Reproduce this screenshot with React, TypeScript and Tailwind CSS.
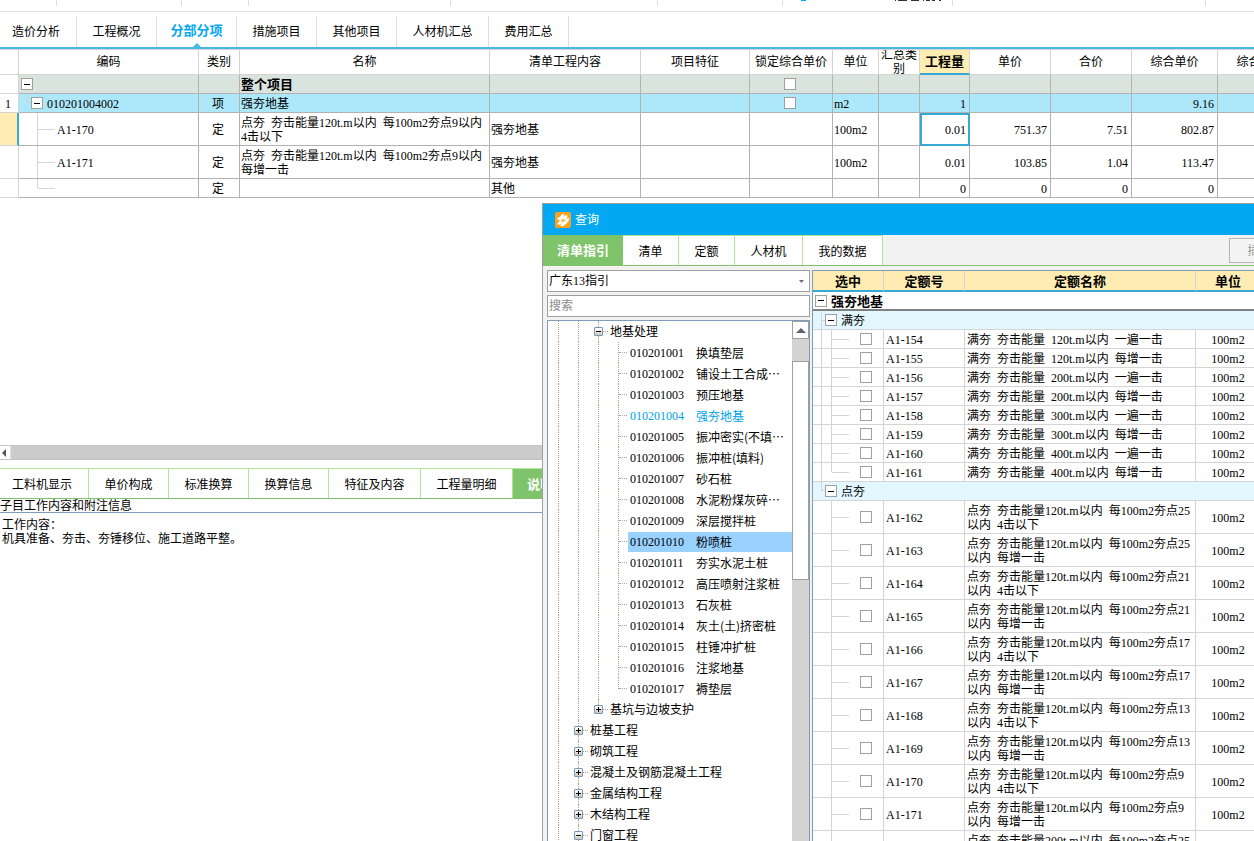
import React from "react";

const toolbarGroups = ["w-[57px]", "w-[125px]", "w-[67px]", "w-[202px]", "w-[207px]", "w-[125px]"];

const mainTabs = [
  { label: "造价分析", width: "w-[77px] pr-1" },
  { label: "工程概况", width: "w-20" },
  { label: "分部分项", width: "w-20", active: true },
  { label: "措施项目", width: "w-20" },
  { label: "其他项目", width: "w-20" },
  { label: "人材机汇总", width: "w-[92px]" },
  { label: "费用汇总", width: "w-20" },
];

const columns = [
  { label: "", width: "w-[19px]" },
  { label: "编码", width: "w-[180px]" },
  { label: "类别", width: "w-[41px]" },
  { label: "名称", width: "w-[250px]" },
  { label: "清单工程内容", width: "w-[151px]" },
  { label: "项目特征", width: "w-[109px]" },
  { label: "锁定综合单价", width: "w-[83px]" },
  { label: "单位", width: "w-[46px]" },
  { label: "汇总类别", width: "w-[41px]" },
  { label: "工程量", width: "w-[50px]", active: true },
  { label: "单价", width: "w-[81px]" },
  { label: "合价", width: "w-[81px]" },
  { label: "综合单价", width: "w-[86px]" },
  { label: "综合合价", width: "w-[86px]" },
];

type Row = {
  no: string;
  level: number;
  code: string;
  kind: string;
  name: string;
  content: string;
  lock: boolean;
  unit: string;
  qty: string;
  price: string;
  total: string;
  full: string;
  tall?: boolean;
  current?: boolean;
  last?: boolean;
};

const rows: Row[] = [
  { no: "", level: 0, code: "", kind: "", name: "整个项目", content: "", lock: true, unit: "", qty: "", price: "", total: "", full: "" },
  { no: "1", level: 1, code: "010201004002", kind: "项", name: "强夯地基", content: "", lock: true, unit: "m2", qty: "1", price: "", total: "", full: "9.16" },
  { no: "", level: 2, code: "A1-170", kind: "定", name: "点夯 夯击能量120t.m以内 每100m2夯点9以内\n4击以下", content: "强夯地基", lock: false, unit: "100m2", qty: "0.01", price: "751.37", total: "7.51", full: "802.87", tall: true, current: true },
  { no: "", level: 2, code: "A1-171", kind: "定", name: "点夯 夯击能量120t.m以内 每100m2夯点9以内\n每增一击", content: "强夯地基", lock: false, unit: "100m2", qty: "0.01", price: "103.85", total: "1.04", full: "113.47", tall: true },
  { no: "", level: 2, code: "", kind: "定", name: "", content: "其他", lock: false, unit: "", qty: "0", price: "0", total: "0", full: "0", last: true },
];

const detailTabs = [
  { label: "工料机显示", width: "w-[89px] pr-1" },
  { label: "单价构成", width: "w-20" },
  { label: "标准换算", width: "w-20" },
  { label: "换算信息", width: "w-20" },
  { label: "特征及内容", width: "w-[92px]" },
  { label: "工程量明细", width: "w-[92px]" },
  { label: "说明信息", width: "w-20", active: true },
];

const dialogTabs = [
  { label: "清单指引", width: "w-20", active: true },
  { label: "清单", width: "w-14" },
  { label: "定额", width: "w-14" },
  { label: "人材机", width: "w-[68px]" },
  { label: "我的数据", width: "w-20" },
];

const leaves = [
  ["010201001", "换填垫层"],
  ["010201002", "铺设土工合成⋯"],
  ["010201003", "预压地基"],
  ["010201004", "强夯地基"],
  ["010201005", "振冲密实(不填⋯"],
  ["010201006", "振冲桩(填料)"],
  ["010201007", "砂石桩"],
  ["010201008", "水泥粉煤灰碎⋯"],
  ["010201009", "深层搅拌桩"],
  ["010201010", "粉喷桩"],
  ["010201011", "夯实水泥土桩"],
  ["010201012", "高压喷射注浆桩"],
  ["010201013", "石灰桩"],
  ["010201014", "灰土(土)挤密桩"],
  ["010201015", "柱锤冲扩桩"],
  ["010201016", "注浆地基"],
  ["010201017", "褥垫层"],
];

const chapters = [
  { label: "桩基工程" },
  { label: "砌筑工程" },
  { label: "混凝土及钢筋混凝土工程" },
  { label: "金属结构工程" },
  { label: "木结构工程" },
  { label: "门窗工程", open: true },
];

const fullQuotas = [
  ["A1-154", "满夯 夯击能量 120t.m以内 一遍一击"],
  ["A1-155", "满夯 夯击能量 120t.m以内 每增一击"],
  ["A1-156", "满夯 夯击能量 200t.m以内 一遍一击"],
  ["A1-157", "满夯 夯击能量 200t.m以内 每增一击"],
  ["A1-158", "满夯 夯击能量 300t.m以内 一遍一击"],
  ["A1-159", "满夯 夯击能量 300t.m以内 每增一击"],
  ["A1-160", "满夯 夯击能量 400t.m以内 一遍一击"],
  ["A1-161", "满夯 夯击能量 400t.m以内 每增一击"],
];

const pointQuotas = [
  ["A1-162", "点夯 夯击能量120t.m以内 每100m2夯点25\n以内 4击以下"],
  ["A1-163", "点夯 夯击能量120t.m以内 每100m2夯点25\n以内 每增一击"],
  ["A1-164", "点夯 夯击能量120t.m以内 每100m2夯点21\n以内 4击以下"],
  ["A1-165", "点夯 夯击能量120t.m以内 每100m2夯点21\n以内 每增一击"],
  ["A1-166", "点夯 夯击能量120t.m以内 每100m2夯点17\n以内 4击以下"],
  ["A1-167", "点夯 夯击能量120t.m以内 每100m2夯点17\n以内 每增一击"],
  ["A1-168", "点夯 夯击能量120t.m以内 每100m2夯点13\n以内 4击以下"],
  ["A1-169", "点夯 夯击能量120t.m以内 每100m2夯点13\n以内 每增一击"],
  ["A1-170", "点夯 夯击能量120t.m以内 每100m2夯点9\n以内 4击以下"],
  ["A1-171", "点夯 夯击能量120t.m以内 每100m2夯点9\n以内 每增一击"],
  ["A1-172", "点夯 夯击能量200t.m以内 每100m2夯点25\n以内 4击以下"],
];

/* Blanks between Chinese words are en spaces, half as wide as a character. */
const withEnSpaces = (text: string) => text.replaceAll(" ", "\u2002");

function Fold({ label }: { label: string }) {
  return (
    <button
      type="button"
      aria-label={label}
      className="flex size-3 shrink-0 items-center justify-center border border-[#a0a0a0] bg-white"
    >
      <span className="h-px w-[6px] bg-black" />
    </button>
  );
}

function Tick({ label }: { label: string }) {
  return (
    <input
      type="checkbox"
      aria-label={label}
      className="block size-3 shrink-0 appearance-none border border-[#a0a0a0] bg-white"
    />
  );
}

function CodeCell({ row }: { row: Row }) {
  if (row.level === 0) {
    return (
      <div className="flex h-[18px] items-center pl-0.5">
        <Fold label="收起整个项目" />
      </div>
    );
  }
  if (row.level === 1) {
    return (
      <div className="flex h-[18px] items-center pl-2">
        <span className="h-[9px] w-1 self-start border-b border-l border-[#d4d4d4]" />
        <Fold label="收起强夯地基" />
        <span className="pl-1 pt-0.5">{row.code}</span>
      </div>
    );
  }
  return (
    <div className={`flex items-center pl-[18px] ${row.tall ? "h-8" : "h-[18px]"}`}>
      <span className={`w-px self-start bg-[#d4d4d4] ${row.last ? "h-[9px]" : "h-full"}`} />
      <span className="h-px w-[17px] bg-[#d4d4d4]" />
      <span className="pl-0.5 pt-0.5">{row.code}</span>
    </div>
  );
}

function MainTable() {
  return (
    <table className="w-[1304px] table-fixed border-separate border-spacing-0">
      <thead>
        <tr>
          {columns.map((c, i) => (
            <th
              key={i}
              className={`h-[26px] overflow-hidden border-r border-t border-[#d4d4d4] p-0 leading-[14px] ${c.width} ${
                c.active
                  ? "border-b-2 border-b-[#38a8d4] bg-[#feecb2] text-[13px] font-bold"
                  : "border-b font-normal"
              }`}
            >
              <div className="flex max-h-6 items-center justify-center">{c.label}</div>
            </th>
          ))}
        </tr>
      </thead>
      <tbody>
        {rows.map((r, i) => {
          const tone = r.level === 0 ? "bg-[#dae4de]" : r.level === 1 ? "bg-[#ade8fa]" : "bg-white";
          const cell = `border-b border-r border-[#b2b2b2] pb-0 pl-px pr-[3px] pt-0.5 ${tone}`;
          return (
            <tr key={i} className={r.tall ? "h-[33px]" : "h-[19px]"}>
              <td
                className={`border-b border-[#d4d4d4] pb-0 pl-[5px] pr-0 pt-0.5 ${
                  r.current ? "border-r-2 border-r-[#38a8d4] bg-[#feecb2]" : "border-r"
                }`}
              >
                {r.no}
              </td>
              <td className={`border-b border-r border-[#b2b2b2] p-0 ${tone}`}>
                <CodeCell row={r} />
              </td>
              <td className={`${cell} text-center`}>{r.kind}</td>
              <td className={`${cell} whitespace-pre ${r.level === 0 ? "text-[13px] font-bold" : ""}`}>
                {withEnSpaces(r.name)}
              </td>
              <td className={cell}>{r.content}</td>
              <td className={cell} />
              <td className={`border-b border-r border-[#b2b2b2] py-0 pl-0 pr-0.5 ${tone}`}>
                <div className="flex justify-center">{r.lock && <Tick label={`锁定综合单价 ${r.name}`} />}</div>
              </td>
              <td className={cell}>{r.unit}</td>
              <td className={cell} />
              <td className={`${cell} text-right ${r.current ? "outline-2 -outline-offset-2 outline-[#38a8d4]" : ""}`}>
                {r.qty}
              </td>
              <td className={`${cell} text-right`}>{r.price}</td>
              <td className={`${cell} text-right`}>{r.total}</td>
              <td className={`${cell} text-right`}>{r.full}</td>
              <td className={cell} />
            </tr>
          );
        })}
      </tbody>
    </table>
  );
}

function Guide() {
  return (
    <span className="flex h-full w-5 shrink-0 pl-[10px]">
      <span className="h-full border-l border-dotted border-[#a9a594]" />
    </span>
  );
}

function Branch({ end }: { end?: boolean }) {
  return (
    <span className="flex h-full w-5 shrink-0 items-center pl-[10px]">
      <span className={`self-start border-l border-dotted border-[#a9a594] ${end ? "h-[11px]" : "h-full"}`} />
      <span className="h-px w-2 border-t border-dotted border-[#a9a594]" />
    </span>
  );
}

function Node({ open, end, label }: { open?: boolean; end?: boolean; label: string }) {
  return (
    <span className="flex h-full w-[22px] shrink-0 items-center pl-[6px]">
      <span className="flex h-full w-[9px] flex-col items-center">
        <span className="h-[6px] border-l border-dotted border-[#a9a594]" />
        <button
          type="button"
          aria-label={label}
          className="size-[9px] shrink-0 rounded-[1px] border border-[#7898b5] bg-linear-to-b from-white to-[#cfcabd]"
        >
          <svg viewBox="0 0 7 7" className="block size-[7px]">
            <path d={open ? "M1 3h5v1H1z" : "M1 3h2V1h1v2h2v1H4v2H3V4H1z"} fill="#000" shapeRendering="crispEdges" />
          </svg>
        </button>
        {!end && <span className="h-[6px] border-l border-dotted border-[#a9a594]" />}
      </span>
      <span className="h-px w-[5px] border-t border-dotted border-[#a9a594]" />
    </span>
  );
}

function Tree() {
  return (
    <ul className="min-w-0 flex-1 overflow-hidden">
      <li className="flex h-[21px] items-center">
        <Guide />
        <Guide />
        <Node open label="收起地基处理" />
        地基处理
      </li>
      {leaves.map(([code, name], i) => (
        <li key={code} className="flex h-[21px] items-center whitespace-nowrap">
          <Guide />
          <Guide />
          <Guide />
          <Branch end={i === leaves.length - 1} />
          <span
            className={`flex h-5 flex-1 items-center pl-0.5 ${code === "010201010" ? "bg-[#99d1ff]" : ""} ${
              code === "010201004" ? "text-[#009fec]" : ""
            }`}
          >
            <span className="w-[66px] shrink-0">{code}</span>
            <span className="font-['Noto_Sans_CJK_SC',sans-serif]">{name}</span>
          </span>
        </li>
      ))}
      <li className="flex h-[21px] items-center">
        <Guide />
        <Guide />
        <Node end label="展开基坑与边坡支护" />
        基坑与边坡支护
      </li>
      {chapters.map((c) => (
        <li key={c.label} className="flex h-[21px] items-center whitespace-nowrap">
          <Guide />
          <Node open={c.open} label={c.label} />
          {c.label}
        </li>
      ))}
    </ul>
  );
}

function QuotaRow({ code, name, tall, outer, end }: { code: string; name: string; tall?: boolean; outer?: boolean; end?: boolean }) {
  return (
    <tr className={tall ? "h-[33px]" : "h-[19px]"}>
      <td className="border-b border-r border-[#d4d4d4] p-0">
        <div className={`flex items-center pl-2 ${tall ? "h-8" : "h-[18px]"}`}>
          <span className={`h-full w-[10px] border-l ${outer ? "border-[#d4d4d4]" : "border-transparent"}`} />
          <span className={`w-px self-start bg-[#d4d4d4] ${end ? "h-[9px]" : "h-full"}`} />
          <span className="h-px w-[17px] bg-[#d4d4d4]" />
          <span className="pl-[11px]">
            <Tick label={code} />
          </span>
        </div>
      </td>
      <td className="border-b border-r border-[#d4d4d4] px-0.5 pb-0 pt-0.5">{code}</td>
      <td className="whitespace-pre border-b border-r border-[#d4d4d4] px-0.5 pb-0 pt-0.5">{withEnSpaces(name)}</td>
      <td className="border-b border-r border-[#d4d4d4] px-0 pb-0 pt-0.5 text-center">100m2</td>
    </tr>
  );
}

function QuotaTable() {
  const heads = [
    { label: "选中", width: "w-[71px]" },
    { label: "定额号", width: "w-[81px]" },
    { label: "定额名称", width: "w-[231px]" },
    { label: "单位", width: "w-[65px]" },
  ];
  return (
    <table className="w-[448px] table-fixed border-separate border-spacing-0">
      <thead>
        <tr>
          {heads.map((h) => (
            <th
              key={h.label}
              className={`h-[21px] border-b-2 border-r border-b-[#38a8d4] border-r-[#d4d4d4] bg-[#feecb2] px-0 pb-0 pt-0.5 text-[13px] font-bold ${h.width}`}
            >
              {h.label}
            </th>
          ))}
        </tr>
      </thead>
      <tbody>
        <tr className="h-[19px]">
          <td colSpan={4} className="border-b-2 border-[#808080] p-0">
            <div className="flex h-[17px] items-center gap-1 pl-0.5 text-[13px] font-bold">
              <Fold label="收起强夯地基" />
              <span className="pt-0.5">强夯地基</span>
            </div>
          </td>
        </tr>
        <tr className="h-[19px]">
          <td colSpan={4} className="border-b border-[#d4d4d4] bg-[#e2f7ff] p-0">
            <div className="flex h-[18px] items-center pl-2">
              <span className="flex h-full w-1 items-center border-l border-[#d4d4d4]">
                <span className="h-px w-full bg-[#d4d4d4]" />
              </span>
              <Fold label="收起满夯" />
              <span className="pl-1 pt-0.5">满夯</span>
            </div>
          </td>
        </tr>
        {fullQuotas.map(([code, name], i) => (
          <QuotaRow key={code} code={code} name={name} outer end={i === fullQuotas.length - 1} />
        ))}
        <tr className="h-[19px]">
          <td colSpan={4} className="border-b border-[#d4d4d4] bg-[#e2f7ff] p-0">
            <div className="flex h-[18px] items-center pl-2">
              <span className="h-[9px] w-1 self-start border-b border-l border-[#d4d4d4]" />
              <Fold label="收起点夯" />
              <span className="pl-1 pt-0.5">点夯</span>
            </div>
          </td>
        </tr>
        {pointQuotas.map(([code, name]) => (
          <QuotaRow key={code} code={code} name={name} tall />
        ))}
      </tbody>
    </table>
  );
}

function QueryDialog() {
  return (
    <section
      aria-label="查询"
      className="absolute bottom-0 left-[542px] right-0 top-[203px] flex flex-col overflow-hidden border-l border-t border-[#a0a0a0] bg-[#f2f2f2]"
    >
      <header className="flex h-[31px] shrink-0 items-center gap-1 bg-[#02a8f1] pl-3 text-white">
        <svg viewBox="0 0 16 16" className="size-4">
          <rect width="16" height="16" rx="2" fill="#f8a21f" />
          <path d="M1.500 6.500C4 6 6 4 7 2l2.500.5L8 5l3-2 2 1-2 2.500 3.500-.5c-.5 3.500-3.500 7-7.500 8.500L5 13.500 7 11l-3.500 2-1-1.500L5 8.500z" fill="#fff" />
          <path d="M5.500 9.500 8.500 7l-1 3 3.500-2.500" fill="none" stroke="#f8a21f" strokeWidth=".9" />
        </svg>
        <h2>查询</h2>
      </header>
      <nav className="flex h-[31px] shrink-0 border-b border-[#7fc46a]">
        {dialogTabs.map((t) => (
          <button
            key={t.label}
            type="button"
            className={`pt-0.5 ${t.width} ${
              t.active ? "bg-[#7fc46a] text-[13px] font-bold text-white" : "border-r border-t border-[#b0e697] bg-white"
            }`}
          >
            {t.label}
          </button>
        ))}
        <div className="flex min-w-0 flex-1 justify-end overflow-hidden pt-[3px]">
          <button type="button" className="-mr-9 h-[25px] w-[61px] shrink-0 border border-[#b4b4b4] bg-[#f4f4f4] text-[#9a9a9a]">
            插入
          </button>
        </div>
      </nav>
      <div className="flex min-h-0 flex-1 gap-0.5 pl-1 pt-1">
        <div className="flex w-[263px] shrink-0 flex-col gap-[3px]">
          <div className="flex h-[22px] shrink-0 items-center border border-[#a0a0a0] bg-white">
            <select aria-label="指引库" className="h-full flex-1 appearance-none bg-transparent pl-px">
              <option>广东13指引</option>
            </select>
            <svg viewBox="0 0 5 3" className="mr-[5px] h-[3px] w-[5px]">
              <path d="M0 0h5L2.500 3z" fill="#6b6b7b" />
            </svg>
          </div>
          <input
            type="text"
            aria-label="搜索"
            placeholder="搜索"
            className="h-[22px] w-full shrink-0 border border-[#a0a0a0] bg-white pl-px placeholder:text-[#8a8a8a]"
          />
          <div className="flex min-h-0 flex-1 overflow-hidden border-x border-t border-[#7f9db9] bg-white">
            <Tree />
            <div className="flex w-[17px] shrink-0 flex-col bg-[#d3d3d3]">
              <button
                type="button"
                aria-label="向上滚动"
                className="flex h-[18px] items-center justify-center border border-[#a0a0a0] bg-white"
              >
                <svg viewBox="0 0 10 5" className="h-[5px] w-[10px]">
                  <path d="M0 5 5 0l5 5z" fill="#5f6272" />
                </svg>
              </button>
              <div className="mt-[22px] h-[219px] border border-[#a0a0a0] bg-white" />
            </div>
          </div>
        </div>
        <div className="min-w-0 flex-1 overflow-hidden border-l border-t border-[#7f9db9] bg-white">
          <QuotaTable />
        </div>
      </div>
    </section>
  );
}

export default function App() {
  return (
    <main
      lang="zh-CN"
      className="relative flex h-screen flex-col overflow-hidden bg-white font-['Liberation_Serif','Noto_Sans_CJK_SC',serif] text-xs leading-[14px] text-black"
    >
      <div className="flex h-3 shrink-0 border-b border-[#e0e0e0]">
        {toolbarGroups.map((w, i) => (
          <span key={i} className={`h-[6px] shrink-0 border-r border-[#dcdcdc] ${w}`} />
        ))}
        <span className="flex h-[6px] w-[170px] shrink-0 border-r border-[#dcdcdc] pl-[18px]">
          <svg viewBox="0 0 140 2" className="h-0.5 w-[140px]" shapeRendering="crispEdges">
            <path d="M0 0h5v1H0z" fill="#02a8f1" />
            <path d="M94 0h1v1h-1zM97 0h9v1h-9zM110 0h8v1h-8zM122 0h1v1h-1zM125 0h4v1h-4zM131 0h3v1h-3zM138 0h2v1h-2z" fill="#333" />
          </svg>
        </span>
        <span className="h-[6px] w-[253px] shrink-0 border-r border-[#dcdcdc]" />
      </div>
      <nav className="flex h-[37px] shrink-0 border-b-2 border-[#46b8e2] pt-1">
        {mainTabs.map((t) => (
          <button
            key={t.label}
            type="button"
            className={`relative border-r border-[#dcdcdc] ${t.width} ${
              t.active ? "pb-0.5 text-[13px] font-bold text-[#02a8f1]" : ""
            }`}
          >
            {t.label}
            {t.active && (
              <svg viewBox="0 0 8 4" className="absolute bottom-0 left-9 h-1 w-2">
                <path d="M0 4 4 0l4 4z" fill="#46b8e2" />
              </svg>
            )}
          </button>
        ))}
      </nav>
      <div className="h-[396px] shrink-0 overflow-hidden">
        <MainTable />
      </div>
      <div className="flex h-[15px] shrink-0 border-y border-[#c4c4c4] bg-[#cbcbcb]">
        <button type="button" aria-label="向左滚动" className="flex w-[11px] items-center border-r border-[#e0e0e0] bg-white pl-0.5">
          <svg viewBox="0 0 4 8" className="h-2 w-1">
            <path d="M4 0v8L0 4z" fill="#555" />
          </svg>
        </button>
      </div>
      <nav className="mt-2 flex h-[31px] shrink-0 border-b border-t border-b-[#7fc46a] border-t-[#b0e697]">
        {detailTabs.map((t) => (
          <button
            key={t.label}
            type="button"
            className={`pt-0.5 ${t.width} ${
              t.active ? "bg-[#7fc46a] text-[13px] font-bold text-white" : "border-r border-[#b0e697]"
            }`}
          >
            {t.label}
          </button>
        ))}
      </nav>
      <h3 className="h-[14px] shrink-0 border-b border-[#7f9db9]">子目工作内容和附注信息</h3>
      <div className="pl-0.5 pt-[5px]">
        <p>工作内容：</p>
        <p>机具准备、夯击、夯锤移位、施工道路平整。</p>
      </div>
      <QueryDialog />
    </main>
  );
}
